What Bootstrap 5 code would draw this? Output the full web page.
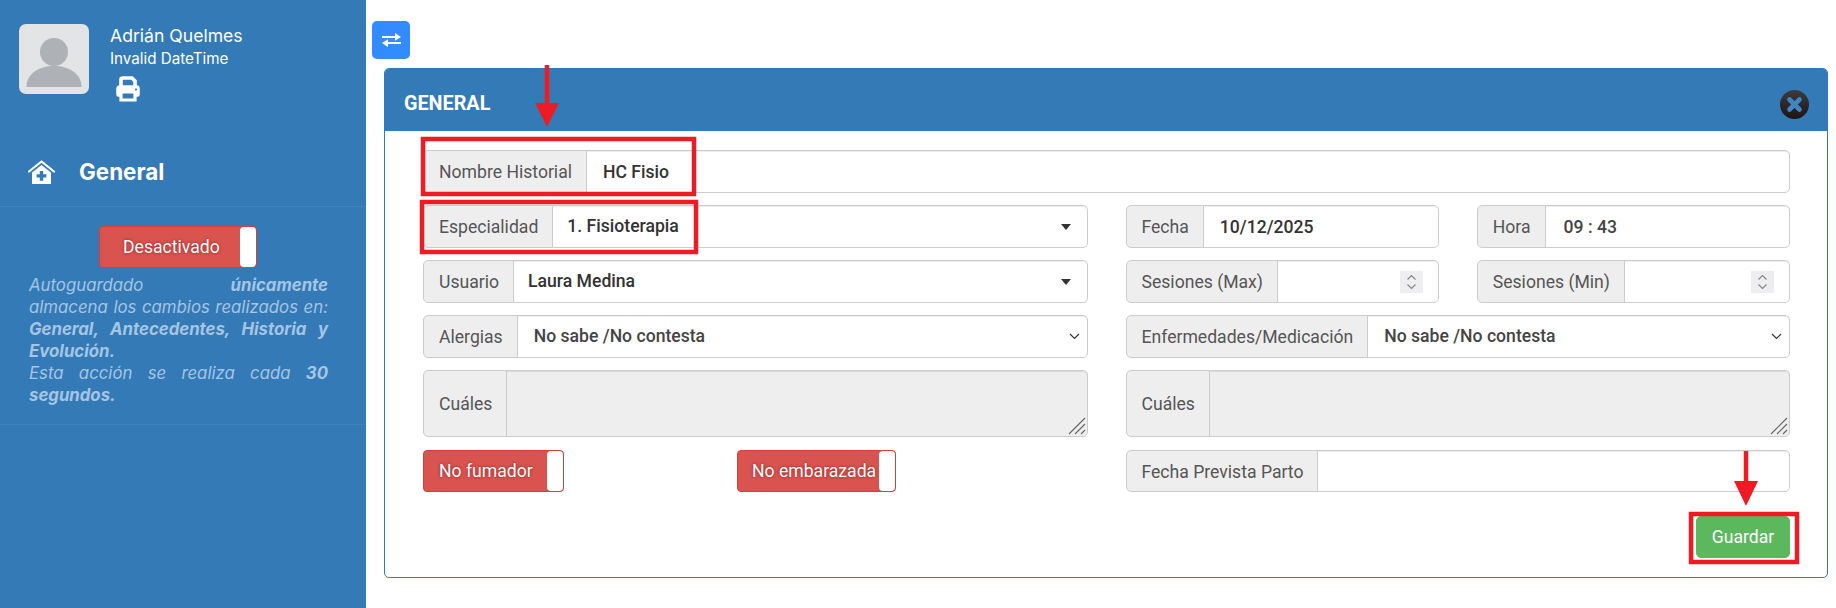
<!DOCTYPE html>
<html lang="es">
<head>
<meta charset="utf-8">
<title>General</title>
<link href="https://cdn.jsdelivr.net/npm/bootstrap@5.3.0/dist/css/bootstrap.min.css" rel="stylesheet">
<style>
html,body{height:608px;overflow:hidden;}
body{font-family:Roboto,"Liberation Sans",sans-serif;font-size:17.6px;color:#333;background:#fff;position:relative;}
.side{width:366px;height:608px;background:#337ab7;color:#fff;font-family:Inter,"Liberation Sans",sans-serif;flex:none;}
.side-user{padding:24px 0 0 19px;height:141px;gap:21px;}
.avatar{width:70px;height:70px;border-radius:7px;background:#e3e4e6;display:block;flex:none;}
.uname{font-size:17.600px;line-height:22px;margin-top:1px;}
.udate{font-size:15.200px;line-height:20px;margin-top:2px;}
.uprint{display:block;margin:7px 0 0 5px;}
.side-nav{height:66px;border-bottom:1px solid #3f83be;padding-left:28px;gap:24px;padding-bottom:3px;}
.side-nav b{font-size:22.400px;font-weight:700;}
.side-auto{height:218px;border-bottom:1px solid #3f83be;padding:19px 38px 0 29px;}
.tgl{display:flex;align-items:center;height:42px;background:#d9534f;border:1px solid #d43f3a;border-radius:4px;color:#fff;font-family:Roboto,sans-serif;font-size:17.600px;text-shadow:0 0 3px #8c1f1c;position:relative;white-space:nowrap;}
.tgl i{position:absolute;right:0;top:0;bottom:0;width:16px;background:#fff;border-radius:4px;}
.tgl-side{width:158px;margin-left:70px;padding-left:23px;}
.tgl-a{width:141px;padding-left:15px;}
.tgl-b{width:159px;padding-left:14px;}
.auto-note{font-size:16.800px;line-height:22px;font-style:italic;color:#a5c5e3;text-align:justify;margin:6px 0 0;}
.auto-note b{font-weight:700;}
.main{flex:1;min-width:0;padding:21px 8px 0 6px;}
.swap{width:38px;height:38px;background:#338cff;border-radius:5px;border:0;padding:0;display:flex;align-items:center;justify-content:center;}
.panel{margin:9px 0 0 12px;height:510px;border:1px solid #337ab7;border-radius:5px;overflow:hidden;}
.panel-top{height:63px;background:#337ab7;color:#fff;font-size:19.800px;font-weight:700;padding:9px 19px 0 20px;margin:-1px -1px 0;}
.panel-in{padding:19px 37px 0 38px;}
.frow{--bs-gutter-x:38px;--bs-gutter-y:12px;}
.frow .input-group{height:43px;flex-wrap:nowrap;}
.frow .input-group.short,.short .input-group-text,.short .form-control{height:42px;}
.input-group-text{background:#eee;color:#555;border-color:#ccc;padding:7px 14px 5px 15px;font-size:17.600px;border-radius:5px;}
.form-control,.form-select{border-color:#ccc;font-size:17.600px;font-weight:500;color:#333;padding:6px 16px;border-radius:5px;box-shadow:inset 0 1px 1px rgba(0,0,0,.075);height:43px;min-width:0;}
.form-select{background-image:url("data:image/svg+xml,%3Csvg xmlns='http://www.w3.org/2000/svg' width='11' height='7'%3E%3Cpath d='M1 1l4.500 4.500L10 1' stroke='%23333' stroke-width='1.200' fill='none'/%3E%3C/svg%3E");background-size:11px 7px;background-position:right 7px center;}
.form-select.pick{padding-left:14px;background-image:url("data:image/svg+xml,%3Csvg xmlns='http://www.w3.org/2000/svg' width='10' height='6'%3E%3Cpath d='M0 0h10L5 6z' fill='%23333'/%3E%3C/svg%3E");background-size:10px 6px;background-position:right 16px center;}
.plain{font-weight:500;color:#444;}
input.plain{padding-left:18px;}
.txta{height:67px !important;margin-bottom:1px;}
.txta .input-group-text{height:67px;}
.form-control.ta{height:67px;background-color:#eee;resize:none;background-image:url("data:image/svg+xml,%3Csvg xmlns='http://www.w3.org/2000/svg' width='18' height='18'%3E%3Cpath d='M1 17 17 1M7 17 17 7M13 17l4-4' stroke='%23666' stroke-width='1.100' fill='none'/%3E%3C/svg%3E");background-repeat:no-repeat;background-position:right 1px bottom 1px;}
.spin{-moz-appearance:textfield;background-image:url("data:image/svg+xml,%3Csvg xmlns='http://www.w3.org/2000/svg' width='23' height='22'%3E%3Crect width='23' height='22' fill='%23eeeef0'/%3E%3Cpath d='M7.500 8.500 11.500 4.500l4 4M7.500 13.500l4 4 4-4' stroke='%23888' stroke-width='1.200' fill='none'/%3E%3C/svg%3E");background-repeat:no-repeat;background-position:right 15px center;}
.spin::-webkit-inner-spin-button,.spin::-webkit-outer-spin-button{-webkit-appearance:none;margin:0;}
.toggles{gap:173px;}
.savebar{padding-top:24px;}
.btn-save{width:94px;height:42px;background:#5cb85c;border:1px solid #5cb85c;color:#fff;font-size:17.600px;border-radius:5px;padding:0;}
.marks{position:absolute;left:0;top:0;pointer-events:none;}
</style>
</head>
<body>
<div class="d-flex">
  <aside class="side">
    <div class="side-user d-flex">
      <svg class="avatar" viewBox="0 0 70 70"><circle cx="35" cy="28" r="14" fill="#aeb2b6"/><path d="M7.500 63c0-13 12-21 27.500-21s27.500 8 27.500 21z" fill="#aeb2b6"/></svg>
      <div>
        <div class="uname">Adrián Quelmes</div>
        <div class="udate">Invalid DateTime</div>
        <svg class="uprint" width="26" height="26" viewBox="0 0 26 26" fill="none"><path d="M6 11V3.500a1.500 1.500 0 0 1 1.500-1.500H17l3 3v6" stroke="#fff" stroke-width="3.600"/><path d="M6 20H3.500A1.500 1.500 0 0 1 2 18.500v-6A2.500 2.500 0 0 1 4.500 10h17a2.500 2.500 0 0 1 2.500 2.500v6a1.500 1.500 0 0 1-1.500 1.500H20" fill="#fff" stroke="#fff" stroke-width="1.500"/><path d="M6 16h14v8H6z" fill="#337ab7" stroke="#fff" stroke-width="3.200"/><circle cx="21" cy="13.500" r="1.100" fill="#337ab7"/></svg>
      </div>
    </div>
    <div class="side-nav d-flex align-items-center">
      <svg width="27" height="24" viewBox="0 0 27 24"><path d="M1 11.500 13.500 1.500 26 11.500" fill="none" stroke="#fff" stroke-width="2.200" stroke-linejoin="round" stroke-linecap="round"/><path d="M4 12.500 13.500 5l9.500 7.500V24H4z" fill="#fff"/><path d="M11.800 11h3.400v3.200h3.200v3.400h-3.200v3.200h-3.400v-3.200H8.600v-3.400h3.200z" fill="#337ab7"/></svg>
      <b>General</b>
    </div>
    <div class="side-auto">
      <span class="tgl tgl-side">Desactivado<i></i></span>
      <p class="auto-note">Autoguardado <b>únicamente</b> almacena&nbsp;los cambios realizados en: <b>General, Antecedentes, Historia y Evolución.</b><br>Esta acción se realiza cada <b>30 segundos.</b></p>
    </div>
  </aside>
  <main class="main">
    <button class="swap" type="button" aria-label="Alternar menú">
      <svg width="19" height="14" viewBox="0 0 19 14"><path d="M0 2.900h13V0l6 3.900-6 3.900V4.900H0z" fill="#fff"/><path d="M19 9.100H6V6.200L0 10.100 6 14v-2.900h13z" fill="#fff"/></svg>
    </button>
    <section class="panel">
      <header class="panel-top d-flex align-items-center justify-content-between">
        <span>GENERAL</span>
        <svg width="29" height="29" viewBox="0 0 29 29"><defs><linearGradient id="cg" x1="0" y1="0" x2="0" y2="1"><stop offset="0" stop-color="#3c3c3e"/><stop offset="1" stop-color="#1c1414"/></linearGradient></defs><circle cx="14.500" cy="14.500" r="14.500" fill="url(#cg)"/><path d="M9.500 9.500l10 10M19.500 9.500l-10 10" stroke="#3f86c4" stroke-width="4.600" stroke-linecap="round"/></svg>
      </header>
      <div class="panel-in">
        <div class="row frow">
          <div class="col-12">
            <div class="input-group"><span class="input-group-text">Nombre Historial</span><input class="form-control" type="text" value="HC Fisio"></div>
          </div>
          <div class="col-6">
            <div class="input-group"><span class="input-group-text">Especialidad</span><select class="form-select pick"><option>1. Fisioterapia</option></select></div>
          </div>
          <div class="col-6">
            <div class="row frow">
              <div class="col-6"><div class="input-group"><span class="input-group-text">Fecha</span><input class="form-control" type="text" value="10/12/2025"></div></div>
              <div class="col-6"><div class="input-group"><span class="input-group-text">Hora</span><input class="form-control plain" type="text" value="09 : 43"></div></div>
            </div>
          </div>
          <div class="col-6">
            <div class="input-group"><span class="input-group-text">Usuario</span><select class="form-select pick"><option>Laura Medina</option></select></div>
          </div>
          <div class="col-6">
            <div class="row frow">
              <div class="col-6"><div class="input-group"><span class="input-group-text">Sesiones (Max)</span><input class="form-control spin" type="number"></div></div>
              <div class="col-6"><div class="input-group"><span class="input-group-text">Sesiones (Min)</span><input class="form-control spin" type="number"></div></div>
            </div>
          </div>
          <div class="col-6">
            <div class="input-group"><span class="input-group-text">Alergias</span><select class="form-select plain"><option>No sabe /No contesta</option></select></div>
          </div>
          <div class="col-6">
            <div class="input-group"><span class="input-group-text">Enfermedades/Medicación</span><select class="form-select plain"><option>No sabe /No contesta</option></select></div>
          </div>
          <div class="col-6">
            <div class="input-group txta"><span class="input-group-text">Cuáles</span><textarea class="form-control ta" readonly></textarea></div>
          </div>
          <div class="col-6">
            <div class="input-group txta"><span class="input-group-text">Cuáles</span><textarea class="form-control ta" readonly></textarea></div>
          </div>
          <div class="col-6">
            <div class="d-flex toggles"><span class="tgl tgl-a">No fumador<i></i></span><span class="tgl tgl-b">No embarazada<i></i></span></div>
          </div>
          <div class="col-6">
            <div class="input-group short"><span class="input-group-text">Fecha Prevista Parto</span><input class="form-control" type="text"></div>
          </div>
        </div>
        <div class="savebar d-flex justify-content-end"><button class="btn-save" type="button">Guardar</button></div>
      </div>
    </section>
  </main>
</div>
<svg class="marks" width="1836" height="608" viewBox="0 0 1836 608" fill="none">
  <g stroke="#ed1c24" stroke-width="4.500">
    <rect x="423" y="139" width="271" height="55"/>
    <rect x="422" y="202" width="274" height="50"/>
    <rect x="1691" y="514" width="106" height="48"/>
    <path d="M547 65v40M1746 451v32"/>
  </g>
  <path d="M535 103h24l-12 24zM1734 481h24l-12 25z" fill="#ed1c24"/>
</svg>
<script src="https://cdn.jsdelivr.net/npm/bootstrap@5.3.0/dist/js/bootstrap.bundle.min.js"></script>
</body>
</html>
